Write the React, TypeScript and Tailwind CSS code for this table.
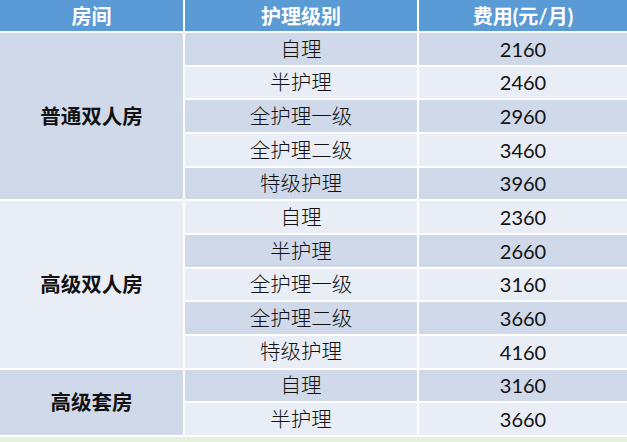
const GROUPS = [
  {
    room: '普通双人房',
    items: [
      ['自理', '2160'],
      ['半护理', '2460'],
      ['全护理一级', '2960'],
      ['全护理二级', '3460'],
      ['特级护理', '3960'],
    ],
  },
  {
    room: '高级双人房',
    items: [
      ['自理', '2360'],
      ['半护理', '2660'],
      ['全护理一级', '3160'],
      ['全护理二级', '3660'],
      ['特级护理', '4160'],
    ],
  },
  {
    room: '高级套房',
    items: [
      ['自理', '3160'],
      ['半护理', '3660'],
    ],
  },
]

const DARK = 'bg-[#d0d9e9]'
const LIGHT = 'bg-[#e9edf5]'

export default function App() {
  let idx = 0
  const cells: React.ReactNode[] = []

  GROUPS.forEach((g, gi) => {
    const first = idx
    g.items.forEach(([level, fee], i) => {
      const bg = (idx % 2 === 0) ? DARK : LIGHT
      if (i === 0) {
        const span = g.items.length === 5 ? 'row-span-5' : 'row-span-2'
        cells.push(
          <div key={`r${gi}`} className={`${span} ${first % 2 === 0 ? DARK : LIGHT} flex items-center justify-center font-bold text-[20.5px] text-[#111]`}>
            {g.room}
          </div>
        )
      }
      cells.push(
        <div key={`l${idx}`} className={`${bg} flex items-center justify-center text-[20.5px] font-light text-[#111]`}>{level}</div>,
        <div key={`f${idx}`} className={`${bg} flex items-center justify-center text-[20px] text-[#111]`}>{fee}</div>
      )
      idx++
    })
  })

  return (
    <div className="w-[627px] h-[442px] bg-[#e6f1dd] overflow-hidden" style={{ fontFamily: 'Lato, "Noto Sans CJK SC", sans-serif' }}>
      <div className="grid grid-cols-[183px_232px_1fr] grid-rows-[31px] auto-rows-[31.67px] gap-[2px] bg-white pb-[2px] leading-none">
        <div className="bg-[#5b9bd5] flex items-center justify-center text-white font-bold text-[20px]">房间</div>
        <div className="bg-[#5b9bd5] flex items-center justify-center text-white font-bold text-[20px]">护理级别</div>
        <div className="bg-[#5b9bd5] flex items-center justify-center text-white font-bold text-[20px]">费用(元/月)</div>
        {cells}
      </div>
    </div>
  )
}
